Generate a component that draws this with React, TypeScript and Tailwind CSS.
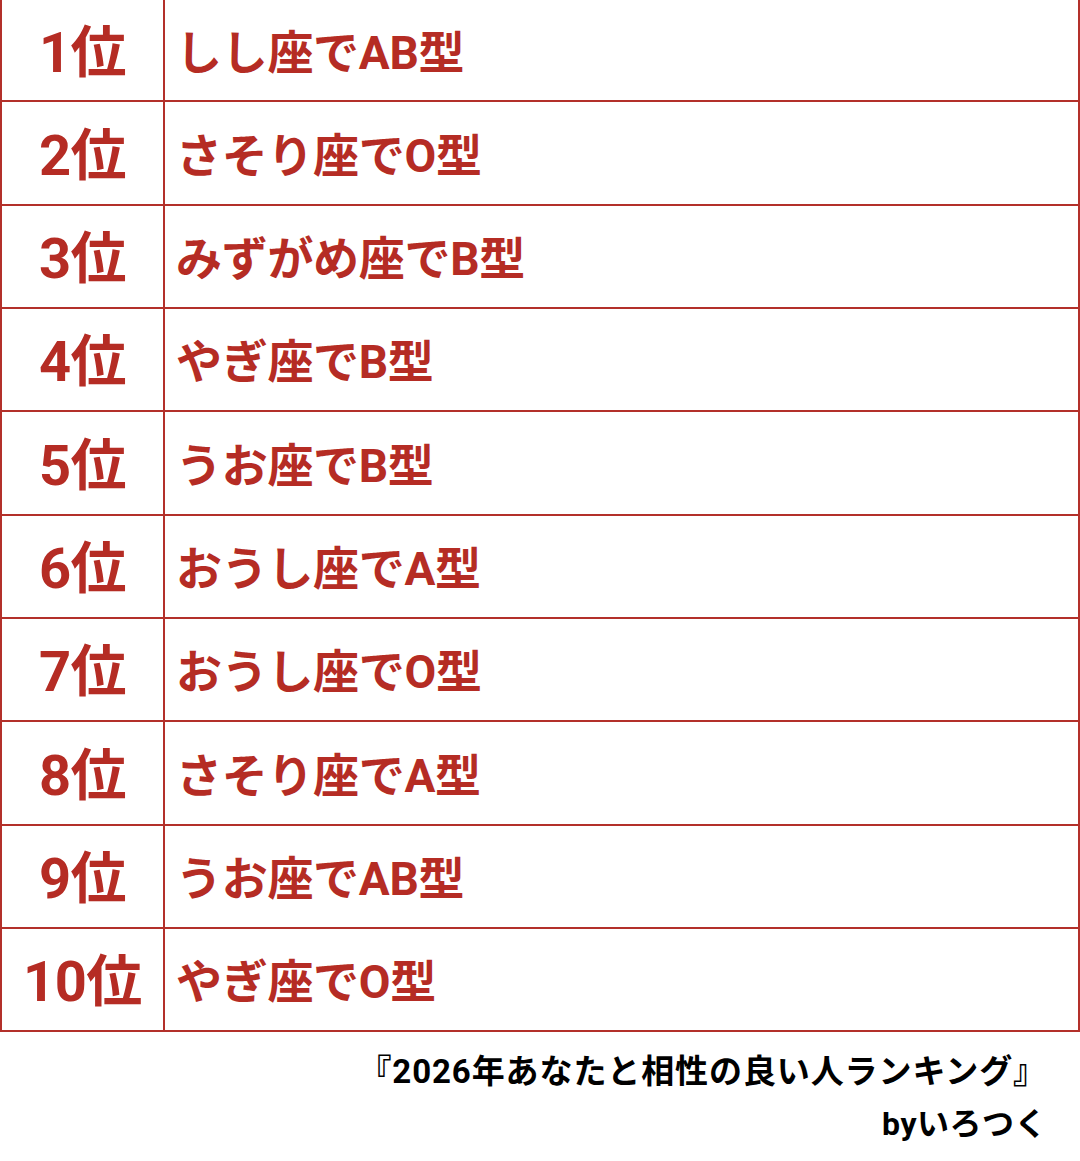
import React from "react";

const rows: { rank: string; text: string; h: string }[] = [
  { rank: "1位", text: "しし座でAB型", h: "h-[102px]" },
  { rank: "2位", text: "さそり座でO型", h: "h-[104px]" },
  { rank: "3位", text: "みずがめ座でB型", h: "h-[103px]" },
  { rank: "4位", text: "やぎ座でB型", h: "h-[103px]" },
  { rank: "5位", text: "うお座でB型", h: "h-[104px]" },
  { rank: "6位", text: "おうし座でA型", h: "h-[103px]" },
  { rank: "7位", text: "おうし座でO型", h: "h-[103px]" },
  { rank: "8位", text: "さそり座でA型", h: "h-[104px]" },
  { rank: "9位", text: "うお座でAB型", h: "h-[103px]" },
  { rank: "10位", text: "やぎ座でO型", h: "h-[103px]" },
];

export default function App() {
  return (
    <div
      className="w-[1080px] h-[1161px] bg-white overflow-hidden"
      style={{ fontFamily: 'Roboto, "Noto Sans CJK JP", "Noto Sans", sans-serif' }}
    >
      <div className="flex flex-col border-x-2 border-[#b3302a]">
        {rows.map((r) => (
          <div
            key={r.rank}
            className={`flex ${r.h} border-b-2 border-[#b3302a] box-border`}
          >
            <div className="w-[163px] shrink-0 border-r-2 border-[#b3302a] flex items-center justify-center pt-[5px] text-[56px] font-bold text-[#b52c24] leading-none tracking-[-0.5px]">
              {r.rank}
            </div>
            <div className="flex items-center pl-[11px] pt-[5px] text-[46px] font-bold text-[#b52c24] leading-none tracking-[-0.3px]">
              {r.text}
            </div>
          </div>
        ))}
      </div>
      <div className="flex flex-col items-end pr-[33px] pt-[14px] font-bold text-black leading-[52px]">
        <div className="text-[33px] tracking-[0.9px]">『2026年あなたと相性の良い人ランキング』</div>
        <div className="text-[32px] tracking-[0.5px]">byいろつく</div>
      </div>
    </div>
  );
}
